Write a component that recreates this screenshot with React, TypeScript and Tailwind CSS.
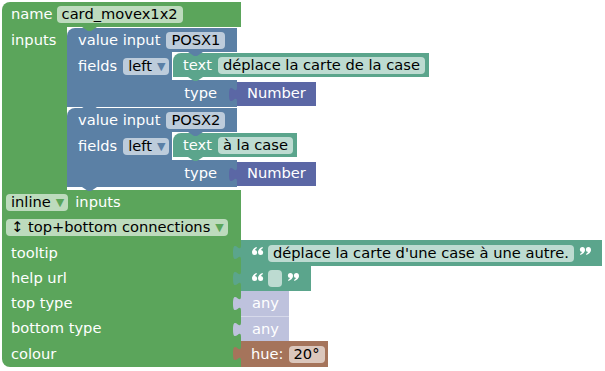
import React from 'react';

type Kids = { children?: React.ReactNode; className?: string };

const Field = ({ children, className = '' }: Kids) => (
  <span className={`inline-flex h-[17px] items-center rounded-[4px] bg-white/60 px-[5px] text-black ${className}`}>
    {children}
  </span>
);

const Dropdown = ({ children, className = '', arrow }: Kids & { arrow: string }) => (
  <span className={`inline-flex h-[17px] items-center rounded-[4px] bg-white/60 pl-[5px] pr-[4px] text-black ${className}`}>
    {children}
    <span className={`ml-[5px] text-[11px] ${arrow}`}>▼</span>
  </span>
);

// puzzle tab sticking out to the left of an output block
const OutTab = ({ fill }: { fill: string }) => (
  <svg className="absolute left-[-8px] top-[5px] overflow-visible" width="8" height="15" viewBox="0 0 8 15">
    <path d="M8 0 C8 10 0 -8 0 7.5 S8 5 8 15 Z" fill={fill} />
  </svg>
);

// previous/next notch tab
const NextTab = ({ fill, className = '' }: { fill: string; className?: string }) => (
  <svg className={`absolute left-[15px] z-10 ${className}`} width="15" height="4" viewBox="0 0 15 4">
    <path d="M0 0 L6 4 L9 4 L15 0 Z" fill={fill} />
  </svg>
);

// blockly's quote pictures, drawn as two "6" marks (open) or rotated (close)
const Quote = ({ close }: { close?: boolean }) => (
  <svg
    className={`relative top-[-2px] ${close ? 'rotate-180' : ''}`}
    width="12"
    height="8"
    viewBox="0 0 12 8"
    fill="white"
  >
    <circle cx="2.6" cy="5.4" r="2.5" />
    <path d="M0.1 5.4 C0.1 2.6 1.9 0.8 4.5 0 L5 1 C3.5 1.8 2.7 3 2.7 4.2 Z" />
    <circle cx="8.6" cy="5.4" r="2.5" />
    <path d="M6.1 5.4 C6.1 2.6 7.9 0.8 10.5 0 L11 1 C9.5 1.8 8.7 3 8.7 4.2 Z" />
  </svg>
);

const TextBlock = ({ text }: { text: string }) => (
  <div className="relative flex h-[24px] items-center rounded-tl-[8px] bg-[#5ba58c] pl-[10px] pr-[4px] text-white">
    <span>text</span>
    <Field className="ml-[6px]">{text}</Field>
    <NextTab fill="#5ba58c" className="bottom-[-4px]" />
  </div>
);

const ValueInput = ({ name, text }: { name: string; text: string }) => (
  <div className="relative w-max">
    <div className="flex h-[24px] w-[170px] items-center rounded-tl-[8px] bg-[#5b80a5] pl-[11px] text-white">
      <span>value input</span>
      <Field className="ml-[6px]">{name}</Field>
    </div>
    <div className="flex">
      <div className="flex h-[28px] w-[105px] items-center bg-[#5b80a5] pl-[11px] text-white">
        <span>fields</span>
        <Dropdown className="ml-[6px]" arrow="text-[#5b80a5]">left</Dropdown>
      </div>
      <div className="relative ml-[1px] pt-[1px]">
        <TextBlock text={text} />
        <NextTab fill="#5b80a5" className="top-0" />
      </div>
    </div>
    <div className="flex items-center">
      <div className="flex h-[27px] w-[170px] items-center justify-end bg-[#5b80a5] pr-[20px] text-white">type</div>
      <div className="relative flex h-[24px] items-center bg-[#5b67a5] px-[10px] text-white">
        <OutTab fill="#5b67a5" />
        Number
      </div>
    </div>
    <NextTab fill="#5b80a5" className="bottom-[-4px]" />
  </div>
);

const ValueRow = ({ label, h, children, last }: { label: string; h: string; children?: React.ReactNode; last?: boolean }) => (
  <div className="flex">
    <div className={`flex w-[239px] items-center bg-[#5ba55b] pl-[9px] text-white ${h} ${last ? 'rounded-bl-[8px]' : ''}`}>
      {label}
    </div>
    {children}
  </div>
);

export default function App() {
  return (
    <div className="min-h-screen bg-white pl-[2px] pt-[2px] font-['DejaVu_Sans',sans-serif] text-[14.67px] leading-none">
      <div className="flex w-max flex-col">
        <div className="flex h-[25px] w-[239px] items-center rounded-tl-[8px] bg-[#5ba55b] pl-[9px] text-white">
          <span>name</span>
          <Field className="ml-[4px]">card_movex1x2</Field>
        </div>

        <div className="flex">
          <div className="w-[65px] bg-[#5ba55b] pl-[9px] pt-[1px] text-white">
            <div className="flex h-[24px] items-center">inputs</div>
          </div>
          <div className="relative flex flex-col gap-[1px] pb-[3px] pt-[1px]">
            <ValueInput name="POSX1" text="déplace la carte de la case" />
            <ValueInput name="POSX2" text="à la case" />
            <NextTab fill="#5ba55b" className="top-0" />
          </div>
        </div>

        <div className="flex h-[25px] w-[239px] items-center bg-[#5ba55b] pl-[4px] text-white">
          <Dropdown arrow="text-[#5ba55b]">inline</Dropdown>
          <span className="ml-[7px]">inputs</span>
        </div>
        <div className="flex h-[25px] w-[239px] items-center bg-[#5ba55b] pl-[4px]">
          <Dropdown arrow="text-[#5ba55b]">↕ top+bottom connections</Dropdown>
        </div>

        <ValueRow label="tooltip" h="h-[26px]">
          <div className="relative flex h-[26px] w-[361px] items-center bg-[#5ba58c] pl-[11px]">
            <OutTab fill="#5ba58c" />
            <Quote />
            <Field className="ml-[4px]">déplace la carte d'une case à une autre.</Field>
            <span className="ml-[5px] flex">
              <Quote close />
            </span>
          </div>
        </ValueRow>
        <ValueRow label="help url" h="h-[25px]">
          <div className="relative flex h-[25px] w-[70px] items-center bg-[#5ba58c] pl-[11px]">
            <OutTab fill="#5ba58c" />
            <Quote />
            <Field className="ml-[4px] w-[14px]" />
            <span className="ml-[5px] flex">
              <Quote close />
            </span>
          </div>
        </ValueRow>
        <ValueRow label="top type" h="h-[25px]">
          <div className="relative flex h-[25px] w-[48px] items-center bg-[#bec2dd] pl-[11px] text-white">
            <OutTab fill="#bec2dd" />
            any
          </div>
        </ValueRow>
        <ValueRow label="bottom type" h="h-[25px]">
          <div className="relative flex h-[25px] w-[48px] items-center border-t border-[#d6d9ea] bg-[#bec2dd] pl-[11px] text-white">
            <OutTab fill="#bec2dd" />
            any
          </div>
        </ValueRow>
        <ValueRow label="colour" h="h-[26px]" last>
          <div className="relative flex h-[26px] w-[87px] items-center bg-[#a5745b] pl-[10px] text-white">
            <OutTab fill="#a5745b" />
            <span>hue:</span>
            <Field className="ml-[5px]">20°</Field>
          </div>
        </ValueRow>
      </div>
    </div>
  );
}
